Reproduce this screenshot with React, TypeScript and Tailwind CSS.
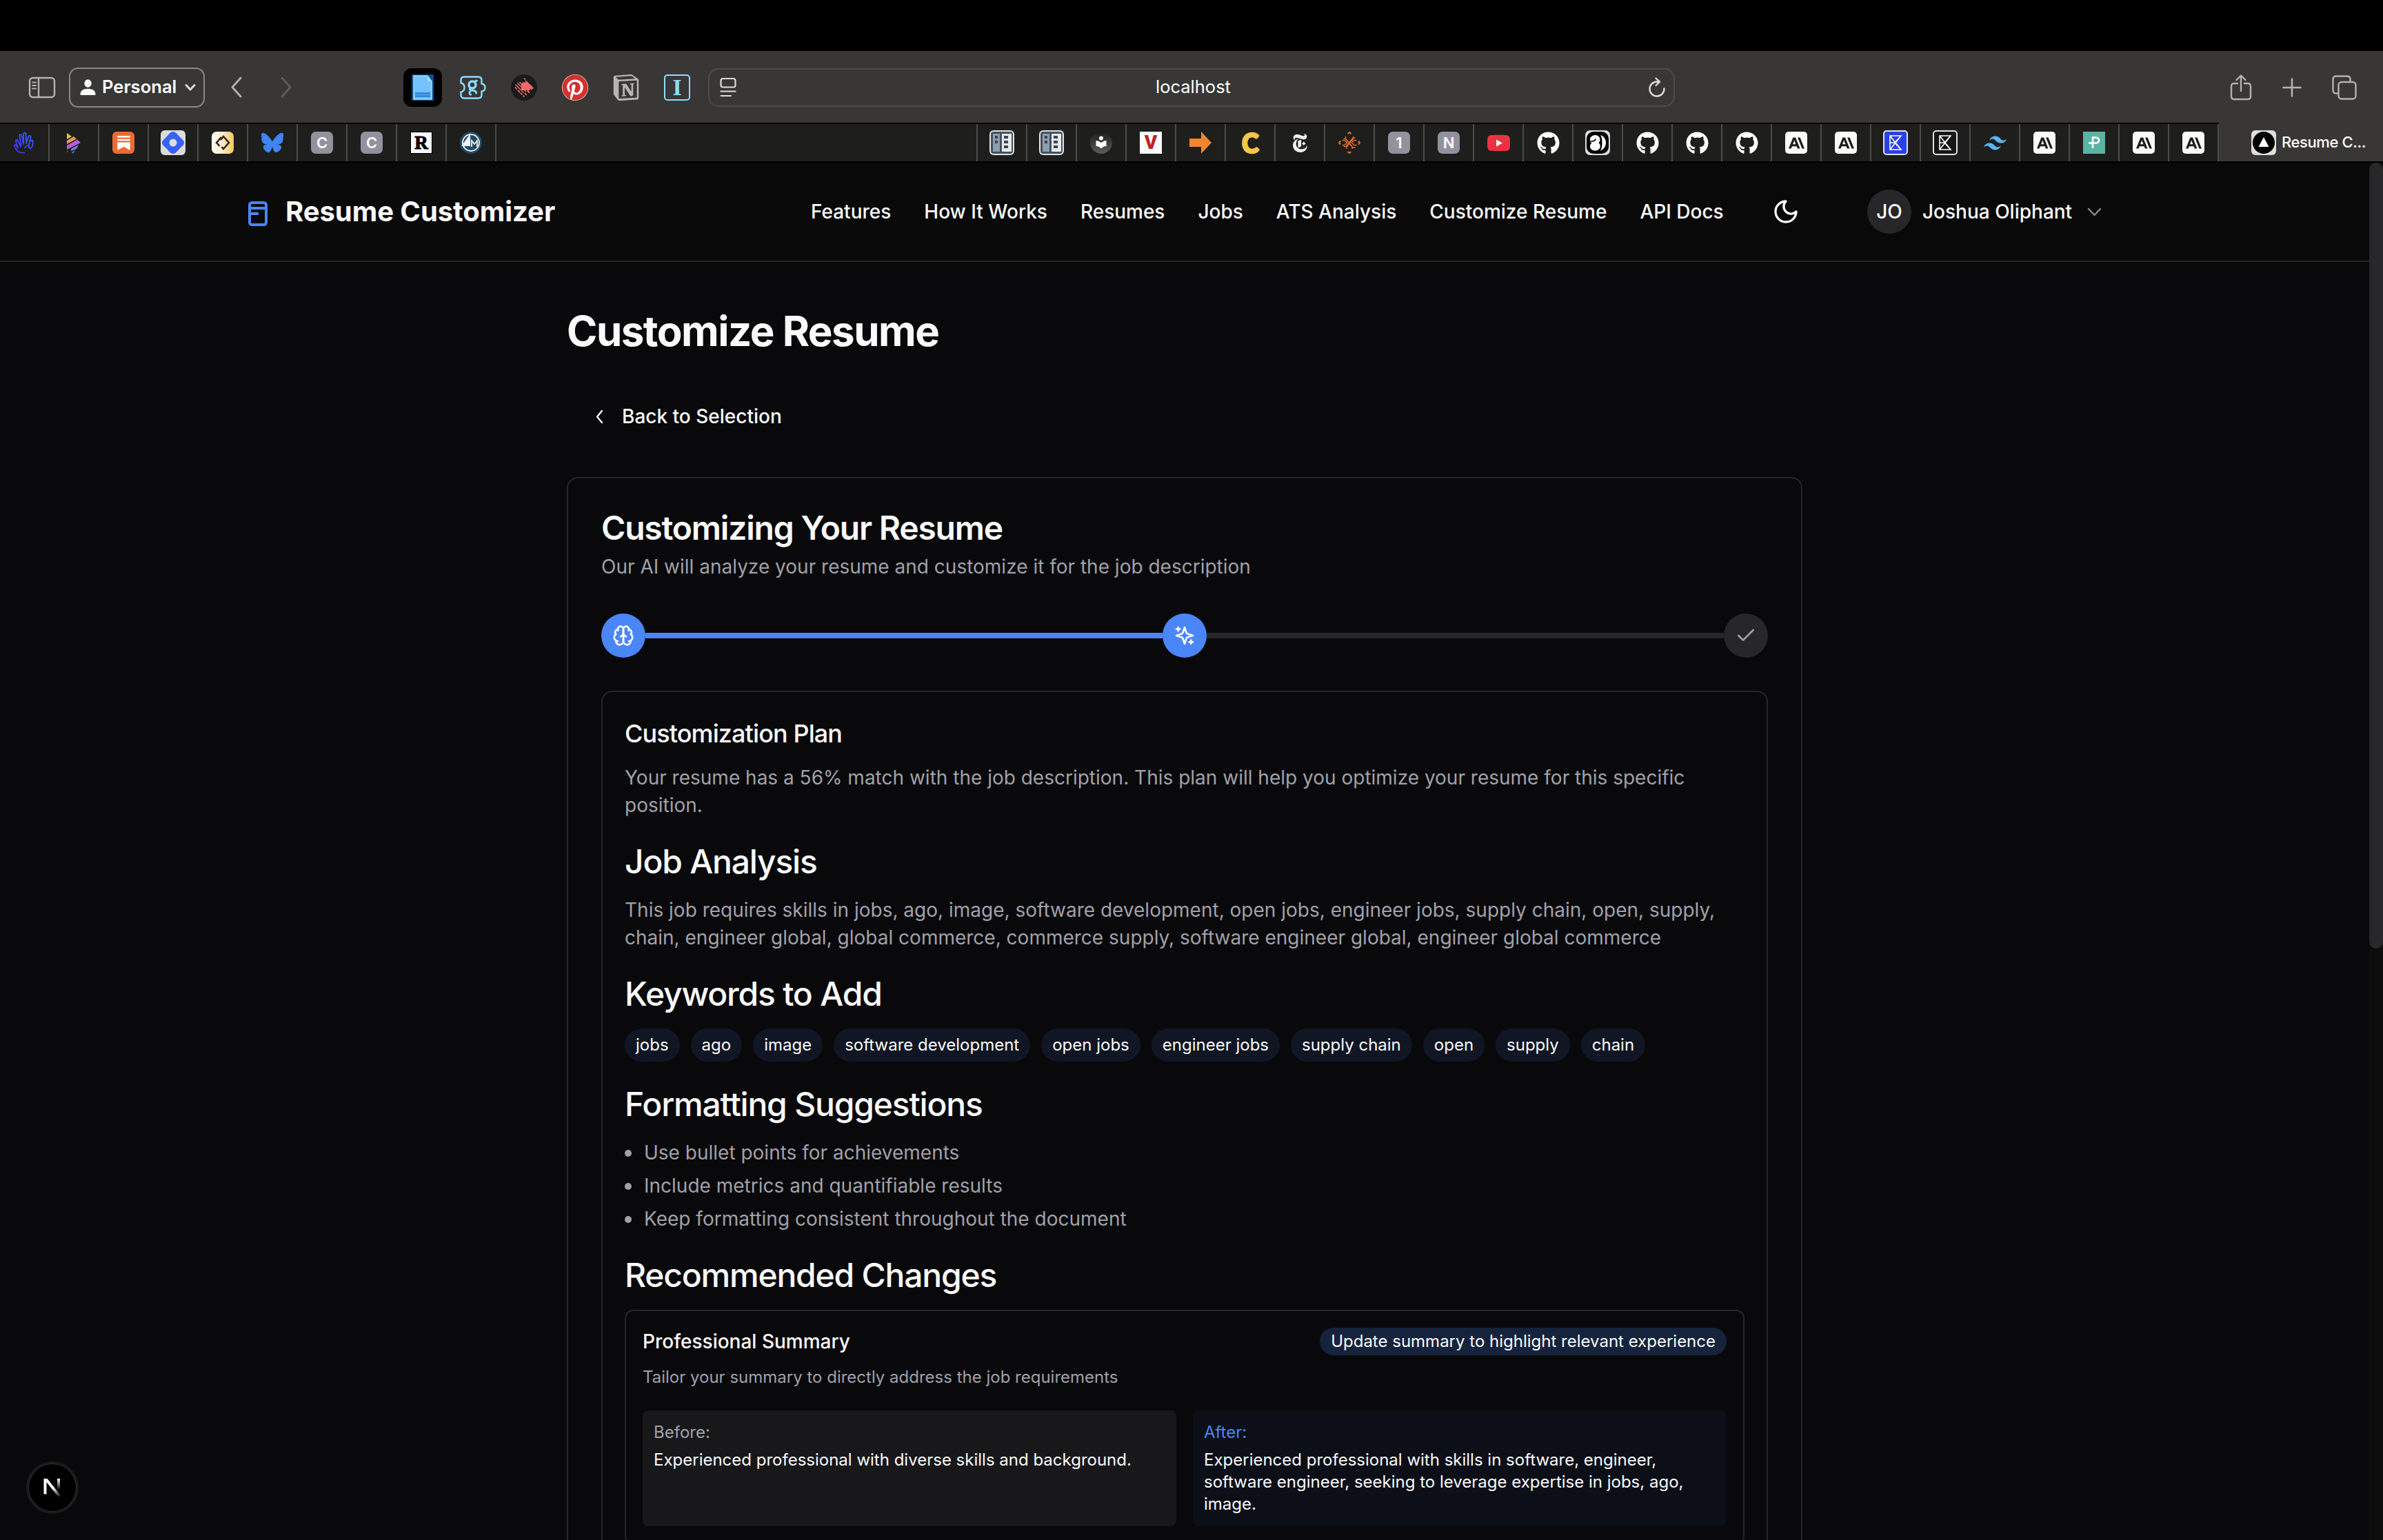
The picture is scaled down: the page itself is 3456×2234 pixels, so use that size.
import React from "react";
import { FaGithub, FaPinterest, FaYoutube } from "react-icons/fa";
import { FaBluesky } from "react-icons/fa6";
import { SiAnthropic, SiNewyorktimes, SiNotion, SiSubstack, SiTailwindcss } from "react-icons/si";

/* ---------- Toolbar icons ---------- */

const SidebarIcon = () => (
  <svg width="40" height="32" viewBox="0 0 40 32" fill="none" stroke="#b3b2b0" strokeWidth="2.4">
    <rect x="2" y="2" width="36" height="28" rx="4.5" />
    <path d="M15 2v28" />
    <path d="M6 8.500h5M6 13h5M6 17.500h5" strokeWidth="2" strokeLinecap="round" />
  </svg>
);

const PersonIcon = () => (
  <svg width="23" height="24" viewBox="0 0 23 24" fill="#fff">
    <ellipse cx="11.500" cy="6" rx="5.200" ry="5.800" />
    <path d="M0.500 21.500C0.500 16.500 5 13.800 11.500 13.800s11 2.700 11 7.700c0 1-.6 1.500-1.600 1.500H2.100c-1 0-1.600-.5-1.600-1.500z" />
  </svg>
);

const Chevron = ({ d, w, h, color, sw = 3 }: { d: string; w: number; h: number; color: string; sw?: number }) => (
  <svg width={w} height={h} viewBox={`0 0 ${w} ${h}`} fill="none" stroke={color} strokeWidth={sw} strokeLinecap="round" strokeLinejoin="round">
    <path d={d} />
  </svg>
);

const DocIcon = () => (
  <svg width="32" height="38" viewBox="0 0 32 38">
    <rect width="32" height="38" fill="#1667b8" opacity=".75" />
    <path d="M3 2h20l6 8v26H3z" fill="#74c2fc" stroke="#9bdcff" strokeWidth="1.500" />
    <path d="M23 2v8h6z" fill="#a5e0ff" />
    <rect x="5" y="26" width="22" height="7" fill="#3387d6" />
    <path d="M5 29.500h22" stroke="#5aa9ec" strokeWidth="1.200" />
  </svg>
);

const PuzzleIcon = () => (
  <svg width="38" height="38" viewBox="0 0 38 38" fill="none" stroke="#8fdcff" strokeLinejoin="round">
    <path
      strokeWidth="2.400"
      d="M6 3.500h20.500c3 0 5 2 5 5v5c3.200.3 5 2.500 5 5.500s-1.800 5.200-5 5.500v5c0 3-2 5-5 5H6.500c-3 0-5-1.700-5-4.500v-4.500c3.300-.5 5-3 5-6.500s-1.700-6-5-6.500V8c0-2.800 1.700-4.500 4.500-4.500z"
    />
    <circle cx="18" cy="15" r="5" strokeWidth="3.400" />
    <path
      strokeWidth="2.800"
      strokeLinecap="round"
      d="M21.500 12c.3-2 1.200-3 3-2.800M15.500 19.500c-2 1.500-1.500 3.300 1 3.500 4.500.3 7.500.8 7 4M14.500 25c-1 1.800-.5 3.500 1 4.300"
    />
  </svg>
);

const StripeDiamondIcon = () => (
  <svg width="38" height="38" viewBox="0 0 38 38">
    <circle cx="19" cy="19" r="19" fill="#1b1a1a" />
    <path d="M15 13.500l2-2h4V8l12 11.500-3 3-2.500-2V23H15z" fill="#ee6a68" />
    <path d="M15 13.500l-2.500-2.500M21 7.500l-2-2M15 18l-5.500-5.500M15 23l-8.500-8.500M18.500 26.500l-3-3M22 25l-2.500-2.500M26 25l-2-2" stroke="#ee6a68" strokeWidth="1.600" />
    <path d="M6 18.500l13.500 14M13 26l-2-2M20 27l4 4M24 24l3 3" stroke="#ee6a68" strokeWidth="1.800" strokeDasharray="4 1.600" />
  </svg>
);

const ReaderIcon = () => (
  <svg width="24" height="30" viewBox="0 0 24 30" fill="none" stroke="#dddcdb" strokeWidth="2.200" strokeLinecap="round">
    <rect x="1.500" y="2" width="21" height="12.500" rx="3" />
    <path d="M1.500 20.500h21M1.500 27h14.500" />
  </svg>
);

const ReloadIcon = () => (
  <svg width="28" height="32" viewBox="0 0 28 32" fill="none" stroke="#dddcdb" strokeWidth="2.400" strokeLinecap="round" strokeLinejoin="round">
    <path d="M24.500 17.500A10.500 10.500 0 1 1 14 7.500l2.500.3" />
    <path d="M12.500 2.500l5.500 5.200-5.500 5.300" />
  </svg>
);

const ShareIcon = () => (
  <svg width="32" height="40" viewBox="0 0 32 40" fill="none" stroke="#b3b2b0" strokeWidth="2.400" strokeLinecap="round" strokeLinejoin="round">
    <path d="M11 14H6c-2.600 0-4 1.400-4 4v15c0 2.600 1.400 4 4 4h20c2.600 0 4-1.400 4-4V18c0-2.600-1.400-4-4-4h-5" />
    <path d="M16 25V3M9.500 9L16 2.500 22.500 9" />
  </svg>
);

const PlusIcon = () => (
  <svg width="28" height="28" viewBox="0 0 28 28" fill="none" stroke="#b3b2b0" strokeWidth="2.600" strokeLinecap="round">
    <path d="M14 1.500v25M1.500 14h25" />
  </svg>
);

const TabsIcon = () => (
  <svg width="36" height="36" viewBox="0 0 36 36" fill="none" stroke="#b3b2b0" strokeWidth="2.400" strokeLinecap="round">
    <rect x="9.500" y="10" width="25" height="24.500" rx="4.500" />
    <path d="M9 26.500H6c-3 0-4.500-1.500-4.500-4.500V6c0-3 1.500-4.500 4.500-4.500h16c3 0 4.500 1.500 4.500 4.500v3" />
  </svg>
);

/* ---------- Tab favicons ---------- */

const HandFav = () => (
  <svg width="32" height="32" viewBox="0 0 32 32" fill="none" strokeWidth="1.900" stroke="url(#ink)" strokeLinecap="round" strokeLinejoin="round">
    <defs>
      <linearGradient id="ink" gradientUnits="userSpaceOnUse" x1="4" y1="30" x2="26" y2="4">
        <stop offset="0" stopColor="#4a2df0" />
        <stop offset="1" stopColor="#2f62f2" />
      </linearGradient>
    </defs>
    <path d="M16 30.500C9 31.500 4.500 27.500 2 21.500c-.9-2.600 1.800-3.400 2.800-1.200L7 24L4.200 14.500c-.7-2.800 2.200-3.500 3.100-.9L11 22" />
    <path d="M11.500 20L9.300 6.500c-.3-2.900 2.700-3.200 3.300-.4L15 18" />
    <path d="M15.200 17L15 4c0-3.200 3.400-3.200 3.600 0l.4 13" />
    <path d="M19 17l3.200-9.500c1-2.700 3.800-1.800 3.200.9L23.500 17c-2 5-5 3.500-6.500 6.500" />
    <path d="M24 14.500c1.500-3 5-2.500 4.800.8C28.500 20 27.500 24 25 24c-2 0-2.500-2-1.800-4.500" />
  </svg>
);

const StripesFav = () => (
  <svg width="32" height="32" viewBox="0 0 32 32">
    <path d="M6 2l7 5-7 4z" fill="#d9c34f" />
    <path d="M6 13l10-6 4 3.500L6 18z" fill="#e79a55" />
    <path d="M6 20l15-8.500 5 4.500L6 26z" fill="#b45fe0" />
    <path d="M12 25l11-6-3 6-8 3z" fill="#6f7fe0" />
    <path d="M13 30l5-3-3 5z" fill="#5b7bd0" />
    <path d="M6 27v3l2-1z" fill="#7a4ac0" />
  </svg>
);

const HexFav = () => (
  <svg width="36" height="36" viewBox="0 0 36 36">
    <rect width="36" height="36" rx="6" fill="#dcdcdc" />
    <path d="M18 2c4 0 6 4 10 8s6 5 6 8-2 4-6 8-6 8-10 8-6-4-10-8-6-5-6-8 2-4 6-8 6-8 10-8z" fill="#3762f5" />
    <circle cx="18" cy="18" r="5.500" fill="#dcdcdc" />
  </svg>
);

const CodeFav = () => (
  <svg width="32" height="32" viewBox="0 0 32 32">
    <defs>
      <linearGradient id="gold" x1="0" y1="0" x2="1" y2="0">
        <stop offset="0" stopColor="#fffdf8" />
        <stop offset=".5" stopColor="#f8ebcf" />
        <stop offset="1" stopColor="#efcb55" />
      </linearGradient>
    </defs>
    <rect width="32" height="32" rx="7" fill="url(#gold)" />
    <path d="M14 8l-7 8 4.500 5M13 12l4-5 8 9-8 9-2.500-3" fill="none" stroke="#3a2413" strokeWidth="2.600" />
  </svg>
);

const SeaFav = () => (
  <svg width="32" height="32" viewBox="0 0 32 32" fill="none">
    <circle cx="16" cy="16" r="16" fill="#234a62" />
    <circle cx="16" cy="16" r="12" stroke="#eef3f6" strokeWidth="1.800" />
    <path d="M15 3v18H2z" fill="#eef3f6" />
    <path d="M17 22v-9l4 5 4-5v9" stroke="#eef3f6" strokeWidth="1.800" />
  </svg>
);

const LayoutFav = () => (
  <svg width="36" height="36" viewBox="0 0 36 36">
    <rect width="36" height="36" rx="6" fill="#e2e3e5" />
    <rect x="2" y="2" width="32" height="32" rx="4" fill="#46505c" />
    <rect x="5" y="5" width="10" height="26" fill="#8c9fb0" />
    <rect x="18" y="5" width="14" height="26" fill="#e6eaee" />
    <path d="M8 8h4v4H8zM8 15h4v4H8zM21 8h6v4h-6zM21 15h6v4h-6zM21 22h6v4h-6z" fill="#3c444e" />
  </svg>
);

const ReadingFav = () => (
  <svg width="32" height="32" viewBox="0 0 32 32">
    <defs>
      <linearGradient id="slate" x1="0" y1="0" x2="0" y2="1">
        <stop offset="0" stopColor="#1c1c1c" />
        <stop offset="1" stopColor="#5c5c5c" />
      </linearGradient>
    </defs>
    <circle cx="16" cy="16" r="16" fill="url(#slate)" />
    <circle cx="16" cy="9.500" r="3" fill="#fff" />
    <path d="M8.500 13c3.500 0 5.500 1.500 7.500 3 2-1.500 4-3 7.500-3v8c-3.500 0-5.500 1.500-7.500 3.500-2-2-4-3.500-7.500-3.500z" fill="#fff" />
  </svg>
);

const ArrowFav = () => (
  <svg width="32" height="32" viewBox="0 0 32 32">
    <path d="M0 10h17V0l15 16-15 16V22H0z" fill="#f08633" />
  </svg>
);

const WeaveFav = () => (
  <svg width="32" height="32" viewBox="0 0 32 32" fill="none" stroke="#dd6a2c" strokeWidth="1.500">
    <path d="M7.500 10.500h3.500l10 12.500h3.500M7.500 21.500H11L21 9h3.500M10.500 7v3.500L20 22v3M21.500 7v3.500L12 22v3M5.500 12.500l4 .3 3 3.200-3 3.200-4 .3M26.500 12.500l-4 .3-3 3.200 3 3.200 4 .3" />
    <path d="M13.500 3L16 1l2.500 2M13.500 29l2.500 2 2.500-2M3 13.500L1 16l2 2.500M29 13.500l2 2.500-2 2.500" strokeWidth="2.200" />
  </svg>
);

const SwirlFav = () => (
  <svg width="36" height="36" viewBox="0 0 36 36">
    <rect width="36" height="36" rx="7" fill="#dcdcdc" />
    <rect x="2" y="2" width="32" height="32" rx="10" fill="#000" />
    <path d="M14.500 7c4.500 0 7 3 7 6.500 0 2-.8 3.500-2 4.700 1.500 1.200 2.300 2.800 2.300 4.800 0 4-3.300 6.500-7.500 6.500S7 27 7 23.500c0-2 .8-3.800 2.300-5C7.800 17.300 7 15.500 7 13.500 7 10 10 7 14.500 7z" fill="#fff" />
    <path d="M22 7c5 1.500 8 5.500 8 11s-3 9.500-8 11.500c2-3 2.500-7 2.500-11.500S24 10 22 7z" fill="#fff" />
    <path d="M8 15.500c3 1 6.500 0 7-3" fill="none" stroke="#000" strokeWidth="1.800" />
  </svg>
);

const KFav = ({ fill }: { fill: string }) => (
  <svg width="36" height="36" viewBox="0 0 36 36" fill="none">
    <rect x="1" y="1" width="34" height="34" rx="4" fill={fill} stroke="#dfe1e6" strokeWidth="2" />
    <path d="M10 8h16L17 18l9 10H10zM10 8l16 20M10 28L26 8M10 18h8" stroke="#fff" strokeWidth="1.600" />
  </svg>
);

const TriangleFav = () => (
  <svg width="36" height="36" viewBox="0 0 36 36">
    <rect width="36" height="36" rx="6" fill="#dedede" />
    <circle cx="18" cy="18" r="16" fill="#000" />
    <path d="M18 10l7.500 14h-15z" fill="#fff" />
  </svg>
);

const LetterFav = ({ children }: { children: string }) => (
  <span className="flex h-8 w-8 items-center justify-center rounded-[7px] bg-[#92929e] font-['Inter'] text-[22px] leading-none font-semibold text-white">
    {children}
  </span>
);

const AnthropicFav = () => (
  <span className="flex h-8 w-8 items-center justify-center rounded-[5px] bg-[#fafaf8] text-[#1c1c1a]">
    <SiAnthropic size={23} />
  </span>
);

const leftTabs: React.ReactNode[] = [
  <HandFav />,
  <StripesFav />,
  <span className="flex h-8 w-8 items-center justify-center rounded-[6px] bg-[#eb6b34] text-white">
    <SiSubstack size={21} />
  </span>,
  <HexFav />,
  <CodeFav />,
  <FaBluesky size={32} color="#3f85f7" />,
  <LetterFav>C</LetterFav>,
  <LetterFav>C</LetterFav>,
  <span className="flex h-8 w-8 items-center justify-center border border-black bg-[#f7f9fb] font-['Liberation_Serif'] text-[27px] leading-none font-bold text-black">
    <span className="[-webkit-text-stroke:1px_#000]">R</span>
  </span>,
  <SeaFav />,
];

const rightTabs: React.ReactNode[] = [
  <LayoutFav />,
  <LayoutFav />,
  <ReadingFav />,
  <span className="flex h-8 w-8 items-center justify-center bg-white font-['Roboto'] text-[28px] leading-none font-black text-[#b92427]">V</span>,
  <ArrowFav />,
  <span className="scale-x-[.93] font-['Lato'] text-[40px] leading-[32px] font-black text-[#f4c744] [-webkit-text-stroke:2.500px_#f4c744]">C</span>,
  <SiNewyorktimes size={27} color="#f2f2f2" />,
  <WeaveFav />,
  <LetterFav>1</LetterFav>,
  <LetterFav>N</LetterFav>,
  <span className="relative flex h-8 w-8 items-center justify-center">
    <span className="absolute h-3 w-4 bg-white" />
    <FaYoutube className="relative shrink-0" size={35} color="#ea3342" />
  </span>,
  <FaGithub size={33} color="#fff" />,
  <SwirlFav />,
  <FaGithub size={33} color="#fff" />,
  <FaGithub size={33} color="#fff" />,
  <FaGithub size={33} color="#fff" />,
  <AnthropicFav />,
  <AnthropicFav />,
  <KFav fill="#2a40e8" />,
  <KFav fill="#151515" />,
  <SiTailwindcss size={33} color="#5db3f0" />,
  <AnthropicFav />,
  <span className="flex h-8 w-8 items-center justify-center bg-[#5bb3a2]">
    <svg width="20" height="20" viewBox="0 0 20 20" fill="none" stroke="#fff" strokeWidth="2.600">
      <path d="M2 10.500h10c3 0 5-1.500 5-4s-2-4-5-4H8V18" />
    </svg>
  </span>,
  <AnthropicFav />,
  <AnthropicFav />,
];

const Tab = ({ children }: { children: React.ReactNode }) => (
  <div className="flex h-full w-[72px] shrink-0 items-center justify-center border-r-2 border-[#4b4b49]">{children}</div>
);

/* ---------- Browser chrome ---------- */

const Toolbar = () => (
  <div className="flex h-[104px] items-center bg-[#383735] pt-[1px]">
    <div className="flex w-[585px] shrink-0 items-center">
      <div className="ml-[41px] w-[59px]">
        <SidebarIcon />
      </div>
      <div className="flex h-[58px] w-[197px] items-center rounded-[13px] border-2 border-[#8a8988] pl-[14px]">
        <PersonIcon />
        <span className="ml-[9px] w-[114px] text-[25.5px] font-semibold tracking-[0.050px] text-white">Personal</span>
        <span className="ml-[6px]">
          <Chevron d="M2 2.500l6 6.500 6-6.500" w={16} h={11} color="#dedddc" />
        </span>
      </div>
      <div className="ml-[37px] flex gap-[54px]">
        <Chevron d="M15 2L3 15.500 15 29" w={18} h={31} color="#b3b2b0" sw={2.8} />
        <Chevron d="M3 2l12 13.500L3 29" w={18} h={31} color="#5f5e5c" sw={2.8} />
      </div>
    </div>
    <div className="flex items-center">
      <div className="flex h-14 w-14 items-center justify-center rounded-[12px] bg-black">
        <DocIcon />
      </div>
      <div className="ml-[26px] flex gap-9">
        <PuzzleIcon />
        <StripeDiamondIcon />
        <span className="flex h-[38px] w-[38px] items-center justify-center rounded-full bg-white">
          <FaPinterest size={38} color="#d5302c" />
        </span>
        <SiNotion size={38} color="#b7b6b4" />
        <span className="flex h-[38px] w-[38px] items-center justify-center rounded-[5px] border-[2.5px] border-[#8fdcff] font-['Liberation_Serif'] text-[34px] leading-none font-bold text-[#8fdcff]">I</span>
      </div>
    </div>
    <div className="ml-[26px] flex h-14 w-[1402px] items-center rounded-[15px] border-2 border-[#4d4c4b] pr-[10px] pl-[15px]">
      <ReaderIcon />
      <div className="flex-1 pl-[4px] text-center text-[25.5px] text-white">localhost</div>
      <ReloadIcon />
    </div>
    <div className="mr-[38px] ml-auto flex items-center gap-[44px]">
      <ShareIcon />
      <PlusIcon />
      <TabsIcon />
    </div>
  </div>
);

const TabBar = () => (
  <div className="flex h-[58px] bg-[#383735]">
    <div className="flex h-full w-[3218px] shrink-0 border-y-2 border-t-black border-b-black bg-[#1e1e1c]">
      {leftTabs.map((t, i) => (
        <Tab key={i}>{t}</Tab>
      ))}
      <div className="w-[698px] shrink-0 border-r-2 border-[#4b4b49]" />
      {rightTabs.map((t, i) => (
        <Tab key={i}>{t}</Tab>
      ))}
    </div>
    <div className="flex h-full flex-1 items-center border-b-2 border-black pt-[1px] pl-[47px]">
      <TriangleFav />
      <span className="ml-2 text-[22px] font-medium tracking-[-0.400px] whitespace-nowrap text-white">Resume C...</span>
    </div>
  </div>
);

/* ---------- Page icons ---------- */

const Stroke = ({ size, color, children, sw = 2 }: { size: number; color: string; children: React.ReactNode; sw?: number }) => (
  <svg width={size} height={size} viewBox="0 0 24 24" fill="none" stroke={color} strokeWidth={sw} strokeLinecap="round" strokeLinejoin="round">
    {children}
  </svg>
);

const BrainIcon = () => (
  <Stroke size={32} color="#fafafa">
    <path d="M12 5a3 3 0 1 0-5.997.125 4 4 0 0 0-2.526 5.770 4 4 0 0 0 .556 6.588A4 4 0 1 0 12 18Z" />
    <path d="M12 5a3 3 0 1 1 5.997.125 4 4 0 0 1 2.526 5.770 4 4 0 0 1-.556 6.588A4 4 0 1 1 12 18Z" />
    <path d="M15 13a4.500 4.500 0 0 1-3-4 4.500 4.500 0 0 1-3 4" />
    <path d="M17.599 6.500a3 3 0 0 0 .399-1.375M6.003 5.125A3 3 0 0 0 6.401 6.500M3.477 10.896a4 4 0 0 1 .585-.396M19.938 10.500a4 4 0 0 1 .585.396M6 18a4 4 0 0 1-1.967-.516M19.967 17.484A4 4 0 0 1 18 18" />
  </Stroke>
);

const SparklesIcon = () => (
  <Stroke size={32} color="#fafafa">
    <path d="m12 3-1.912 5.813a2 2 0 0 1-1.275 1.275L3 12l5.813 1.912a2 2 0 0 1 1.275 1.275L12 21l1.912-5.813a2 2 0 0 1 1.275-1.275L21 12l-5.813-1.912a2 2 0 0 1-1.275-1.275L12 3Z" />
    <path d="M5 3v4M19 17v4M3 5h4M17 19h4" />
  </Stroke>
);

const NextBadge = () => (
  <div className="absolute top-[1884px] left-[38px] flex h-[76px] w-[76px] items-center justify-center rounded-full border-[3px] border-[#1b1b1b] bg-[#2a2a2a] p-[1px]">
    <div className="flex h-full w-full items-center justify-center rounded-full bg-black">
      <svg width="28" height="30" viewBox="0 0 28 30" fill="none">
        <defs>
          <linearGradient id="stem" x1="0" y1="0" x2="0" y2="1">
            <stop offset="0" stopColor="#fff" />
            <stop offset="1" stopColor="#fff" stopOpacity="0" />
          </linearGradient>
          <linearGradient id="diag" gradientUnits="userSpaceOnUse" x1="15" y1="15" x2="25" y2="29">
            <stop offset="0" stopColor="#fff" />
            <stop offset="1" stopColor="#fff" stopOpacity="0" />
          </linearGradient>
        </defs>
        <rect x="1.500" y="2" width="4" height="22.500" fill="#fff" />
        <path d="M1.500 2h5l20 25-3.500 2z" fill="url(#diag)" />
        <rect x="21" y="2" width="4" height="16" fill="url(#stem)" />
      </svg>
    </div>
  </div>
);

/* ---------- Page ---------- */

const navItems = ["Features", "How It Works", "Resumes", "Jobs", "ATS Analysis", "Customize Resume", "API Docs"];

const Header = () => (
  <header className="flex h-[144px] items-center border-b-2 border-[#27272a] bg-[#090909] pl-[360px]">
    <svg className="mt-[6px]" width="28" height="36" viewBox="0 0 28 36" fill="none" stroke="#4a86f7" strokeWidth="4">
      <rect x="2" y="2" width="24" height="32" rx="3.500" />
      <path d="M4 10h20M4 18h11" strokeLinecap="butt" />
    </svg>
    <span className="ml-[26px] w-[762px] shrink-0 text-[40px] leading-[56px] font-bold tracking-[-0.050px] text-[#fafafa]">Resume Customizer</span>
    <nav className="flex w-[1394px] shrink-0 gap-12 text-[28px] leading-10 font-medium whitespace-nowrap text-[#fafafa]">
      {navItems.map((n) => (
        <span key={n}>{n}</span>
      ))}
    </nav>
    <div className="w-[138px] shrink-0">
      <Stroke size={40} color="#fafafa">
        <path d="M12 3a6 6 0 0 0 9 9 9 9 0 1 1-9-9Z" />
      </Stroke>
    </div>
    <span className="flex h-16 w-16 shrink-0 items-center justify-center rounded-full bg-[#27272a] text-[28px] font-medium text-[#fafafa]">JO</span>
    <span className="ml-4 w-[239px] shrink-0 text-[28px] leading-10 font-medium whitespace-nowrap text-[#fafafa]">Joshua Oliphant</span>
    <Chevron d="M2 2l8.500 9L19 2" w={21} h={13} color="#8e8e90" sw={2.4} />
  </header>
);

const SectionTitle = ({ children }: { children: string }) => (
  <h3 className="mt-8 h-[60px] text-[48px] leading-[60px] font-medium tracking-[-1.200px] text-[#fafafa]">{children}</h3>
);

const keywords = ["jobs", "ago", "image", "software development", "open jobs", "engineer jobs", "supply chain", "open", "supply", "chain"];
const suggestions = [
  "Use bullet points for achievements",
  "Include metrics and quantifiable results",
  "Keep formatting consistent throughout the document",
];

const Steps = () => (
  <div className="mt-12 flex items-center">
    <div className="flex h-16 w-16 items-center justify-center rounded-full bg-[#4a86f7]">
      <BrainIcon />
    </div>
    <div className="h-2 flex-1 bg-[#4a86f7]" />
    <div className="flex h-16 w-16 items-center justify-center rounded-full bg-[#4a86f7]">
      <SparklesIcon />
    </div>
    <div className="h-2 flex-1 bg-[#27272a]" />
    <div className="flex h-16 w-16 items-center justify-center rounded-full bg-[#27272a]">
      <Stroke size={32} color="#a1a1aa">
        <path d="M20 6 9 17l-5-5" />
      </Stroke>
    </div>
  </div>
);

const ChangeCard = () => (
  <div className="mt-5 rounded-[12px] border-2 border-[#27272a] p-6">
    <div className="flex h-10 items-center justify-between">
      <span className="text-[28px] leading-10 font-medium text-[#fafafa]">Professional Summary</span>
      <span className="flex h-10 items-center rounded-full bg-[#16233c] px-4 text-[24px] leading-8 text-[#fafafa]">
        Update summary to highlight relevant experience
      </span>
    </div>
    <p className="mt-4 text-[24px] leading-8 text-[#a1a1aa]">Tailor your summary to directly address the job requirements</p>
    <div className="mt-8 grid grid-cols-2 gap-6 text-[24px] leading-8 text-[#fafafa]">
      <div className="rounded-lg bg-[#18181a] p-4">
        <p className="mb-2 text-[#a1a1aa]">Before:</p>
        <p>Experienced professional with diverse skills and background.</p>
      </div>
      <div className="rounded-lg bg-[#0c0f18] p-4">
        <p className="mb-2 text-[#4a86f7]">After:</p>
        <p>Experienced professional with skills in software, engineer, software engineer, seeking to leverage expertise in jobs, ago, image.</p>
      </div>
    </div>
  </div>
);

const PlanCard = () => (
  <section className="mt-12 rounded-[16px] border-2 border-[#27272a] p-8 text-[28px] leading-10 text-[#a1a1aa]">
    <h2 className="text-[36px] leading-[56px] font-medium tracking-[-0.900px] text-[#fafafa]">Customization Plan</h2>
    <p className="mt-4">Your resume has a 56% match with the job description. This plan will help you optimize your resume for this specific position.</p>
    <SectionTitle>Job Analysis</SectionTitle>
    <p className="mt-5">
      This job requires skills in jobs, ago, image, software development, open jobs, engineer jobs, supply chain, open, supply, chain, engineer global, global commerce, commerce supply, software engineer global, engineer global commerce
    </p>
    <SectionTitle>Keywords to Add</SectionTitle>
    <div className="mt-5 flex gap-4">
      {keywords.map((k) => (
        <span key={k} className="flex h-12 items-center rounded-full bg-[#101624] px-4 text-[24px] leading-8 whitespace-nowrap text-[#fafafa]">
          {k}
        </span>
      ))}
    </div>
    <SectionTitle>Formatting Suggestions</SectionTitle>
    <ul className="mt-5 flex flex-col gap-2">
      {suggestions.map((s) => (
        <li key={s} className="flex items-center">
          <span className="mt-[2px] mr-[18px] h-[10px] w-[10px] rounded-full bg-[#a1a1aa]" />
          {s}
        </li>
      ))}
    </ul>
    <SectionTitle>Recommended Changes</SectionTitle>
    <ChangeCard />
  </section>
);

export default function App() {
  return (
    <div className="h-[2234px] w-[3456px] overflow-hidden bg-black font-['Inter',sans-serif]">
      <div className="h-[74px]" />
      <Toolbar />
      <TabBar />
      <div className="relative flex h-[1998px] overflow-hidden bg-[#09090b]">
        <div className="w-[3436px] shrink-0">
          <Header />
          <main className="mx-auto w-[1792px] pt-16">
            <h1 className="text-[60px] leading-[72px] font-bold tracking-[-1.500px] text-[#fafafa]">Customize Resume</h1>
            <button className="mt-[52px] flex h-[72px] items-center pl-[41px] text-[28px] leading-10 font-medium text-[#fafafa]">
              <Chevron d="M10 2L3 10.500 10 19" w={13} h={21} color="#fafafa" sw={2.4} />
              <span className="ml-[26px]">Back to Selection</span>
            </button>
            <section className="mt-[52px] rounded-[16px] border-2 border-[#27272a] p-12">
              <h2 className="text-[48px] leading-[48px] font-semibold tracking-[-1.200px] text-[#fafafa]">Customizing Your Resume</h2>
              <p className="mt-3 text-[28px] leading-10 text-[#a1a1aa]">Our AI will analyze your resume and customize it for the job description</p>
              <Steps />
              <PlanCard />
            </section>
          </main>
        </div>
        <div className="h-full w-5 bg-[#0c0c0d]">
          <div className="h-[1140px] rounded-[10px] bg-[#28282a]" />
        </div>
        <NextBadge />
      </div>
    </div>
  );
}
